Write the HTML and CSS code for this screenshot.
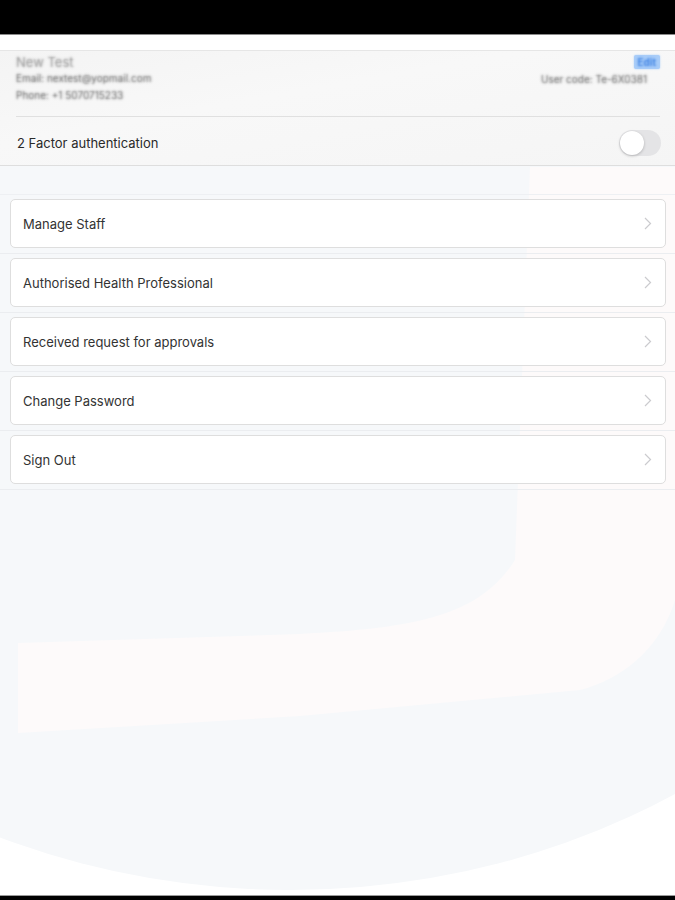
FILE: index.html
```html
<!DOCTYPE html>
<html>
<head>
<meta charset="utf-8">
<link rel="stylesheet" href="styles.css">
</head>
<body>
<div class="screen">
  <svg class="backdrop" width="675" height="900" viewBox="0 0 675 900" aria-hidden="true">
    <ellipse cx="290" cy="270" rx="720" ry="620" fill="#f6f8fa"/>
    <path d="M530 167 L675 167 L675 600 C660 650 620 680 580 690 L300 716 L18 733 L18 643 L300 634 C420 628 480 615 515 560 Z" fill="#fdfafa"/>
  </svg>
  <div class="statusbar"></div>
  <div class="topgap"></div>
  <section class="profile">
    <div class="info">
      <div class="info-left">
        <div class="name blur">New Test</div>
        <div class="meta blur">Email: nextest@yopmail.com</div>
        <div class="meta blur">Phone: +1 5070715233</div>
      </div>
      <div class="info-right">
        <span class="edit"><span class="blur">Edit</span></span>
        <div class="meta blur">User code: Te-6X0381</div>
      </div>
    </div>
    <div class="tfa">
      <span>2 Factor authentication</span>
      <span class="toggle"><span class="knob"></span></span>
    </div>
  </section>
  <div class="strip"></div>
  <nav class="menu">
    <div class="row"><div class="card"><span>Manage Staff</span><svg class="chev" width="8" height="13" viewBox="0 0 8 13"><path d="M1 1 L6.5 6.5 L1 12" fill="none" stroke="#cbcbce" stroke-width="1.2"/></svg></div></div>
    <div class="row"><div class="card"><span>Authorised Health Professional</span><svg class="chev" width="8" height="13" viewBox="0 0 8 13"><path d="M1 1 L6.5 6.5 L1 12" fill="none" stroke="#cbcbce" stroke-width="1.2"/></svg></div></div>
    <div class="row"><div class="card"><span>Received request for approvals</span><svg class="chev" width="8" height="13" viewBox="0 0 8 13"><path d="M1 1 L6.5 6.5 L1 12" fill="none" stroke="#cbcbce" stroke-width="1.2"/></svg></div></div>
    <div class="row"><div class="card"><span>Change Password</span><svg class="chev" width="8" height="13" viewBox="0 0 8 13"><path d="M1 1 L6.5 6.5 L1 12" fill="none" stroke="#cbcbce" stroke-width="1.2"/></svg></div></div>
    <div class="row"><div class="card"><span>Sign Out</span><svg class="chev" width="8" height="13" viewBox="0 0 8 13"><path d="M1 1 L6.5 6.5 L1 12" fill="none" stroke="#cbcbce" stroke-width="1.2"/></svg></div></div>
  </nav>
  <div class="filler"></div>
  <div class="bottombar"></div>
</div>
</body>
</html>
```

FILE: styles.css
```css
* { box-sizing: border-box; }
html, body { margin: 0; padding: 0; }
body {
  background: #ffffff;
  font-family: Inter, "Liberation Sans", sans-serif;
  color: #222;
}
.screen {
  position: relative;
  width: 675px;
  height: 900px;
  overflow: hidden;
  display: flex;
  flex-direction: column;
  isolation: isolate;
}
.backdrop {
  position: absolute;
  left: 0;
  top: 0;
  z-index: -1;
}
.statusbar {
  height: 35px;
  background: #000;
  border-bottom: 1px solid #8a8a8a;
  flex: none;
}
.topgap {
  height: 15px;
  background: #fff;
  flex: none;
}
.profile {
  flex: none;
  background: linear-gradient(170deg, #f4f4f4 0%, #f8f8f8 40%, #f5f5f5 100%);
  border-top: 1px solid #e6e6e6;
  border-bottom: 1px solid #dedede;
}
.info {
  display: flex;
  justify-content: space-between;
  padding-top: 3px;
  height: 66px;
  border-bottom: 1px solid #e0e0e0;
  margin: 0 15px 0 16px;
}
.blur {
  color: transparent !important;
  text-shadow: 0 0 2.5px var(--ink);
}
.name {
  --ink: rgba(130,130,130,0.9);
  font-size: 13px;
  line-height: 16px;
}
.meta {
  --ink: rgba(60,60,60,0.85);
  font-size: 10px;
  line-height: 17px;
}
.info-right {
  display: flex;
  flex-direction: column;
  align-items: flex-end;
}
.edit {
  --ink: #2f78e0;
  display: inline-block;
  background: #a9cdf8;
  font-size: 10px;
  font-weight: 600;
  line-height: 14px;
  padding: 0 4px;
  margin-top: 1px;
  border-radius: 2px;
  box-shadow: 0 0 2px #a9cdf8;
}
.info-right .meta { margin-right: 13px; margin-top: 2px; }
.tfa {
  display: flex;
  align-items: center;
  justify-content: space-between;
  height: 48px;
  padding: 3px 14px 0 17px;
  font-size: 13px;
  color: #2a2a2a;
}
.toggle {
  position: relative;
  display: inline-block;
  width: 42px;
  height: 26px;
  border-radius: 13px;
  background: #e4e4e6;
}
.knob {
  position: absolute;
  left: 1px;
  top: 1px;
  width: 24px;
  height: 24px;
  border-radius: 50%;
  background: #fff;
  box-shadow: 0 1px 3px rgba(0,0,0,0.22);
}
.strip {
  height: 29px;
  flex: none;
  border-bottom: 1px solid #eef0f3;
}
.menu { flex: none; }
.row {
  padding: 4px 9px 5px 10px;
  border-bottom: 1px solid #ebedf0;
}
.card {
  height: 49px;
  background: #fff;
  border: 1px solid #dedede;
  border-radius: 5px;
  display: flex;
  align-items: center;
  justify-content: space-between;
  padding: 0 13px 0 12px;
  font-size: 13px;
  color: #333;
}
.chev { flex: none; }
.filler { flex: 1; }
.bottombar {
  height: 5px;
  flex: none;
  background: #000;
  border-top: 1px solid #9a9a9a;
}
```
